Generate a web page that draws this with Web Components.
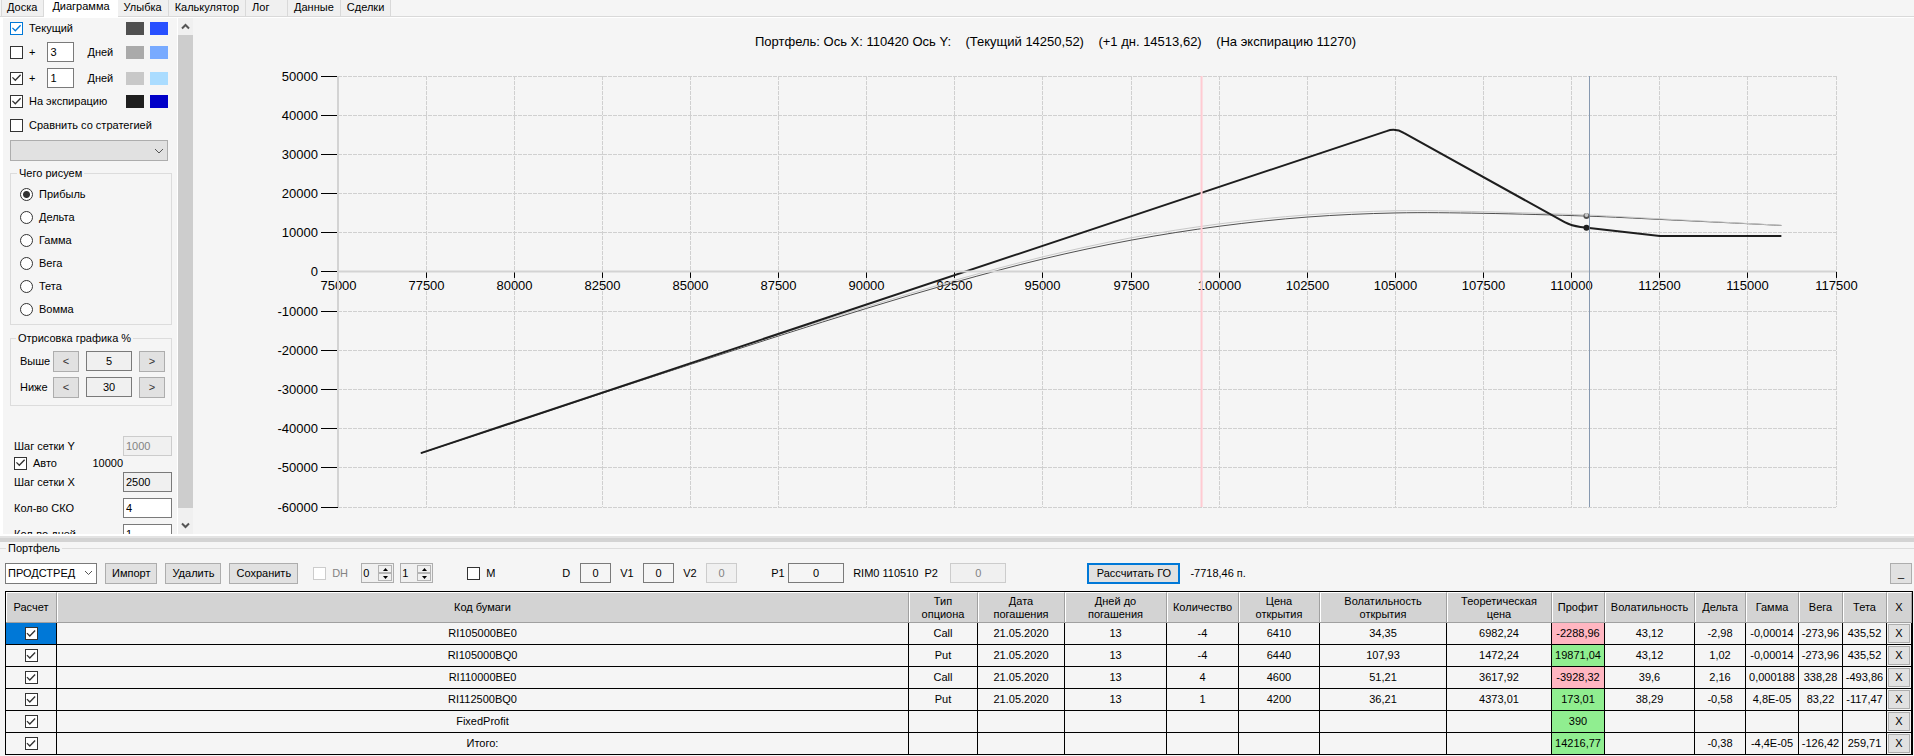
<!DOCTYPE html>
<html lang="ru">
<head>
<meta charset="utf-8">
<title>Портфель</title>
<style>
html, body { margin: 0; height: 100%; }
body {
    background: #f5f5f5;
    color: #000;
    font: 11px/13px "Liberation Sans", Arial, sans-serif;
}
</style>
</head>
<body>
<option-desk></option-desk>

<script>
const base = `
<style>
*, *::before, *::after { box-sizing: border-box; }
button, input, select { font: inherit; color: inherit; margin: 0; border-radius: 0; outline: none; }
button { background: #e1e1e1; border: 1px solid #adadad; padding: 0; }
input[type=text] {
    height: 20px;
    border: 1px solid #7a7a7a;
    background: #fff;
    padding: 0 2px;
    min-width: 0;
}
input[type=text].gray { background: #f0f0f0; }
input[type=text]:disabled { border-color: #ccc; background: #f0f0f0; color: #838383; }
fieldset { margin: 0; min-width: 0; border: 1px solid #dcdcdc; }
legend { padding: 0 2px; }
</style>
`

// checkbox or radio with its label
class TickBox extends HTMLElement {
    constructor() {
        super()
        this._root = this.attachShadow({ mode: 'open' })
        const type = this.getAttribute('type') || 'checkbox'
        const checked = this.hasAttribute('checked') ? 'checked' : ''
        const disabled = this.hasAttribute('disabled') ? 'disabled' : ''
        const aria = this.getAttribute('hint') ? `aria-label="${this.getAttribute('hint')}"` : ''
        this._root.innerHTML = `
        ${base}
        <style>
        :host { display: inline-flex; flex: none; }
        label { display: flex; align-items: center; gap: var(--gap, 6px); white-space: nowrap; }
        input {
            appearance: none;
            display: block;
            flex: none;
            width: 13px;
            height: 13px;
            background: #fff;
            border: 1px solid #333;
        }
        input[type=checkbox]:checked::before {
            content: "";
            display: block;
            height: 11px;
            background: #333;
            clip-path: polygon(9% 48%, 17% 40%, 39% 61%, 83% 15%, 92% 24%, 39% 79%);
        }
        input[type=radio] { border-radius: 50%; }
        input[type=radio]:checked { background: radial-gradient(circle, #333 3px, #fff 4px); }
        :host([hot]) input { border-color: #0078d7; }
        :host([hot]) input:checked::before { background: #0078d7; }
        input:disabled { border-color: #ccc; }
        input:disabled + span { color: #838383; }
        </style>
        <label>
            <input type="${type}" ${checked} ${disabled} ${aria}>
            <span><slot></slot></span>
        </label>
        `
    }
}
customElements.define('tick-box', TickBox)

class ColorPair extends HTMLElement {
    constructor() {
        super()
        this._root = this.attachShadow({ mode: 'open' })
        const colors = this.getAttribute('colors').split(' ')
        this._root.innerHTML = `
        <style>
        :host { display: flex; gap: 6px; margin-left: auto; margin-right: 4px; }
        i { width: 18px; height: 13px; }
        </style>
        ${colors.map(c => `<i style="background:${c}"></i>`).join('')}
        `
    }
}
customElements.define('color-pair', ColorPair)

class TabStrip extends HTMLElement {
    constructor() {
        super()
        this._root = this.attachShadow({ mode: 'open' })
        const tabs = this.getAttribute('tabs').split(',')
        const active = this.getAttribute('active')
        this._root.innerHTML = `
        ${base}
        <style>
        :host { display: block; flex: none; border-bottom: 1px solid #fff; }
        nav { display: flex; height: 17px; padding-left: 1px; border-bottom: 1px solid #d9d9d9; }
        button {
            height: 16px;
            min-width: 42px;
            padding: 0 6px 1px;
            background: #f0f0f0;
            border: 0;
            border-right: 1px solid #d9d9d9;
            text-align: left;
        }
        button:first-child { border-left: 1px solid #d9d9d9; padding-left: 5px; }
        button.active { height: 17px; padding: 0 8px 5px; background: #fff; border: 0; }
        </style>
        <nav>${tabs.map(t => `<button class="${t === active ? 'active' : ''}">${t}</button>`).join('')}</nav>
        `
    }
}
customElements.define('tab-strip', TabStrip)

class SidePanel extends HTMLElement {
    constructor() {
        super()
        this._root = this.attachShadow({ mode: 'open' })
        const kinds = ['Прибыль', 'Дельта', 'Гамма', 'Вега', 'Тета', 'Вомма']
        this._root.innerHTML = `
        ${base}
        <style>
        :host { display: flex; flex: none; width: 193px; overflow: hidden; border-left: 3px solid #fff; }
        .body { flex: 1; padding: 0 5px 0 7px; border-right: 1px solid #fff; overflow: hidden; }
        .row { display: flex; align-items: center; height: 21px; }
        .tall { height: 26px; }
        .days { width: 27px; margin: 0 13px 0 12px; }
        .strategy {
            display: block;
            appearance: none;
            width: 100%;
            height: 21px;
            margin-top: 2px;
            border: 1px solid #adadad;
            background: #e1e1e1;
        }
        .pick { display: grid; margin-right: 4px; }
        .pick > * { grid-area: 1 / 1; }
        .pick svg { justify-self: end; align-self: center; margin: 2px 4px 0 0; }
        .kinds { margin-top: 6px; padding: 3px 9px; }
        .kinds .row { height: 23px; }
        .range { margin-top: 7px; padding: 3px 6px 5px 9px; }
        legend { margin-left: -4px; }
        .kinds legend { margin-left: -3px; }
        .range label { width: 33px; }
        .range button { width: 26px; height: 21px; color: #333; }
        .range input { flex: 1; margin: 0 7px; text-align: center; }
        .grid { margin-top: 30px; padding-left: 4px; }
        .grid .row { height: 20px; margin-bottom: 6px; justify-content: space-between; }
        .grid .row:first-child { margin: 0; }
        .grid .auto { height: 14px; margin-bottom: 2px; padding-right: 49px; }
        .grid input { width: 49px; }
        .bar { flex: none; width: 15px; display: flex; flex-direction: column; background: #f0f0f0; }
        .bar button { height: 17px; background: none; border: 0; display: grid; place-items: center; }
        .bar button:last-child { height: 26px; padding-top: 14px; align-items: start; }
        .thumb { flex: 1; background: #cdcdcd; }
        </style>
        <div class="body">
            <div class="row"><tick-box checked hot>Текущий</tick-box><color-pair colors="#505050 #2850ff"></color-pair></div>
            <div class="row tall">
                <tick-box hint="Сдвиг 1"><span>+</span></tick-box>
                <input class="days" type="text" value="3" aria-label="Дней">Дней
                <color-pair colors="#aaaaaa #78aaff"></color-pair>
            </div>
            <div class="row tall">
                <tick-box checked hint="Сдвиг 2"><span>+</span></tick-box>
                <input class="days" type="text" value="1" aria-label="Дней">Дней
                <color-pair colors="#c8c8c8 #aadcff"></color-pair>
            </div>
            <div class="row"><tick-box checked>На экспирацию</tick-box><color-pair colors="#1e1e1e #0000c8"></color-pair></div>
            <div class="row tall"><tick-box>Сравнить со стратегией</tick-box></div>
            <div class="pick">
                <select class="strategy" aria-label="Стратегия"></select>
                <svg width="10" height="6" viewBox="0 0 10 6"><path d="M1 1l4 4 4-4" fill="none" stroke="#555"/></svg>
            </div>
            <fieldset class="kinds">
                <legend>Чего рисуем</legend>
                ${kinds.map((k, i) => `<div class="row"><tick-box type="radio" ${i === 0 ? 'checked' : ''}>${k}</tick-box></div>`).join('')}
            </fieldset>
            <fieldset class="range">
                <legend>Отрисовка графика %</legend>
                <div class="row tall"><label for="above">Выше</label><button>&lt;</button><input id="above" class="gray" type="text" value="5"><button>&gt;</button></div>
                <div class="row tall"><label for="below">Ниже</label><button>&lt;</button><input id="below" class="gray" type="text" value="30"><button>&gt;</button></div>
            </fieldset>
            <div class="grid">
                <div class="row"><label for="stepy">Шаг сетки Y</label><input id="stepy" type="text" value="1000" disabled></div>
                <div class="row auto"><tick-box checked>Авто</tick-box><span>10000</span></div>
                <div class="row"><label for="stepx">Шаг сетки X</label><input id="stepx" class="gray" type="text" value="2500"></div>
                <div class="row"><label for="sko">Кол-во СКО</label><input id="sko" type="text" value="4"></div>
                <div class="row"><label for="ndays">Кол-во дней</label><input id="ndays" type="text" value="1"></div>
            </div>
        </div>
        <div class="bar">
            <button aria-label="Вверх"><svg width="9" height="7" viewBox="0 0 9 7"><path d="M1 5.5l3.5-3.5L8 5.5" fill="none" stroke="#555" stroke-width="2"/></svg></button>
            <div class="thumb"></div>
            <button aria-label="Вниз"><svg width="9" height="7" viewBox="0 0 9 7"><path d="M1 1.5L4.5 5 8 1.5" fill="none" stroke="#555" stroke-width="2"/></svg></button>
        </div>
        `
    }
}
customElements.define('side-panel', SidePanel)

// [underlying price, profit]
const current = [
    [77350, -46300], [80000, -38400], [82500, -30950], [85000, -23600], [87500, -16350], [90000, -9300],
    [92500, -2650], [95000, 3300], [97500, 8100], [100000, 11650], [102500, 14000], [105000, 15050],
    [107500, 14950], [110420, 14250], [112500, 13400], [115000, 12300], [115950, 11850]
]
const nextDay = [
    [77350, -46260], [80000, -38300], [82500, -30820], [85000, -23400], [87500, -16050], [90000, -8900],
    [92500, -2150], [95000, 3850], [97500, 8700], [100000, 12250], [102500, 14550], [105000, 15600],
    [107500, 15350], [110420, 14514], [112500, 13550], [115000, 12350], [115950, 11900]
]

class ProfitChart extends HTMLElement {
    constructor() {
        super()
        this._root = this.attachShadow({ mode: 'open' })
        this._root.innerHTML = `
        <style>
        :host { display: flex; flex-direction: column; flex: 1; min-width: 0; font-size: 13px; }
        h1 { margin: 0; padding: 16px 0 0 4px; font: inherit; line-height: 16px; text-align: center; white-space: pre; }
        .plot { flex: 1; min-height: 0; overflow: hidden; }
        svg { display: block; }
        .net { stroke: #d0d0d0; stroke-dasharray: 4 1; }
        .tick { stroke: #000; }
        </style>
        <h1>Портфель: Ось X: 110420 Ось Y:    (Текущий 14250,52)    (+1 дн. 14513,62)    (На экспирацию 11270)</h1>
        <div class="plot"></div>
        `
        this._plot = this._root.querySelector('.plot')
    }
    connectedCallback() {
        this.draw()
        new ResizeObserver(() => this.draw()).observe(this._plot)
    }
    draw() {
        const w = this._plot.clientWidth
        const h = this._plot.clientHeight
        const left = 145, right = w - 78, top = 26, bottom = h - 27
        const px = v => left + (v - 75000) / 42500 * (right - left)
        const py = v => top + (50000 - v) / 110000 * (bottom - top)
        const snap = n => Math.floor(n) + 0.5
        const smooth = pts => {
            const p = pts.map(([x, y]) => [px(x), py(y)])
            let d = `M${p[0]}`
            for (let i = 0; i < p.length - 1; i++) {
                const a = p[i - 1] || p[i], b = p[i], c = p[i + 1], e = p[i + 2] || c
                d += `C${b[0] + (c[0] - a[0]) / 6},${b[1] + (c[1] - a[1]) / 6} ${c[0] - (e[0] - b[0]) / 6},${c[1] - (e[1] - b[1]) / 6} ${c}`
            }
            return d
        }
        const pt = (x, y) => `${px(x)},${py(y)}`
        let net = '', labels = ''
        for (let v = 50000; v >= -60000; v -= 10000) {
            const y = snap(py(v))
            net += `<path class="net" d="M${left} ${y}H${right}"/>`
            labels += `<path class="tick" d="M${left - 17} ${y}H${left}"/>
                <text x="${left - 20}" y="${y + 4}" text-anchor="end">${v}</text>`
        }
        for (let v = 75000; v <= 117500; v += 2500) {
            const x = snap(px(v))
            net += `<path class="net" d="M${x} ${top}V${bottom}"/>`
            labels += `<path class="tick" d="M${x} ${py(0)}v6"/>
                <text x="${x}" y="${py(0) + 18}" text-anchor="middle">${v}</text>`
        }
        this._plot.innerHTML = `
        <svg width="${w}" height="${h}">
            ${net}
            ${labels}
            <g fill="none">
                <path d="${smooth(current)}" stroke="#505050"/>
                <path d="${smooth(nextDay)}" stroke="#c8c8c8"/>
                <path d="M${pt(77350, -46260)}L${pt(104750, 35940)}Q${pt(105000, 36800)} ${pt(105250, 35440)}L${pt(109800, 12690)}Q${pt(110000, 11690)} ${pt(110250, 11440)}L${pt(112500, 9190)}H${px(115950)}" stroke="#1e1e1e" stroke-width="2"/>
                <path d="M${left} ${top}V${bottom}M${left} ${snap(py(0))}H${right}" stroke="#d3d3d3" stroke-width="2"/>
            </g>
            <path d="M${px(99500)} ${top}V${bottom}" stroke="#ffcbd2" stroke-width="2"/>
            <path d="M${snap(px(110510))} ${top}V${bottom}" stroke="#8799b0"/>
            <circle cx="${px(110420)}" cy="${py(14250)}" r="3" fill="#505050"/>
            <circle cx="${px(110420)}" cy="${py(14514)}" r="2" fill="#c8c8c8"/>
            <circle cx="${px(110420)}" cy="${py(11270)}" r="3" fill="#1e1e1e"/>
        </svg>
        `
    }
}
customElements.define('profit-chart', ProfitChart)

class SpinBox extends HTMLElement {
    constructor() {
        super()
        this._root = this.attachShadow({ mode: 'open' })
        this._root.innerHTML = `
        ${base}
        <style>
        :host { display: flex; box-sizing: border-box; flex: none; width: 33px; height: 20px; border: 1px solid #adadad; }
        input[type=text] { flex: 1; width: 0; height: 18px; border: 0; background: #f0f0f0; padding: 0 1px; }
        div { display: flex; flex-direction: column; width: 16px; padding: 1px; background: #f0f0f0; }
        button { flex: 1; display: grid; place-items: center; min-height: 0; background: #f0f0f0; border-color: #b4b4b4; }
        </style>
        <input type="text" value="${this.getAttribute('value')}" aria-label="${this.getAttribute('hint')}">
        <div>
            <button aria-label="Больше"><svg width="5" height="3"><path d="M0 3L2.5 0 5 3z"/></svg></button>
            <button aria-label="Меньше"><svg width="5" height="3"><path d="M0 0L2.5 3 5 0z"/></svg></button>
        </div>
        `
    }
}
customElements.define('spin-box', SpinBox)

class PortfolioBar extends HTMLElement {
    constructor() {
        super()
        this._root = this.attachShadow({ mode: 'open' })
        this._root.innerHTML = `
        ${base}
        <style>
        :host { display: flex; align-items: center; height: 36px; padding: 0 2px 0 5px; white-space: nowrap; }
        div { display: flex; align-items: center; }
        button { height: 21px; padding: 0 6px; }
        input[type=text] { width: 31px; text-align: center; background: #f5f5f5; }
        .files { gap: 8px; }
        .pick { display: grid; width: 92px; }
        .pick > * { grid-area: 1 / 1; }
        .pick svg { justify-self: end; align-self: center; margin-right: 4px; }
        select { appearance: none; height: 21px; background: #fff; border: 1px solid #7a7a7a; padding: 0 2px; }
        .spins { margin-left: 15px; gap: 6px; }
        .spins tick-box { width: 42px; }
        .multi { margin-left: 34px; width: 95px; }
        .vols { gap: 9px; }
        .vols label { width: 14px; }
        .vols label:first-child { width: 9px; }
        .prices { margin-left: 34px; gap: 4px; }
        .prices label { width: 13px; }
        .prices input[type=text] { width: 56px; }
        .prices span { margin: 0 2px 0 5px; }
        .prices input:last-child { margin-left: 9px; }
        .margin { margin-left: 81px; gap: 10px; }
        .margin button { border: 2px solid #0078d7; width: 93px; padding: 0; }
        .fold { margin-left: auto; width: 22px; padding: 0; }
        </style>
        <div class="files">
            <div class="pick">
                <select aria-label="Портфель"><option>ПРОДСТРЕД</option></select>
                <svg width="9" height="6" viewBox="0 0 9 6"><path d="M1 1l3.5 3.5L8 1" fill="none" stroke="#555"/></svg>
            </div>
            <button>Импорт</button><button>Удалить</button><button>Сохранить</button>
        </div>
        <div class="spins">
            <tick-box disabled>DH</tick-box>
            <spin-box value="0" hint="DH от"></spin-box>
            <spin-box value="1" hint="DH до"></spin-box>
        </div>
        <div class="multi"><tick-box>M</tick-box></div>
        <div class="vols">
            <label for="d">D</label><input id="d" type="text" value="0">
            <label for="v1">V1</label><input id="v1" type="text" value="0">
            <label for="v2">V2</label><input id="v2" type="text" value="0" disabled>
        </div>
        <div class="prices">
            <label for="p1">P1</label><input id="p1" type="text" value="0">
            <span>RIM0 110510</span>
            <label for="p2">P2</label><input id="p2" type="text" value="0" disabled>
        </div>
        <div class="margin"><button>Рассчитать ГО</button><span>-7718,46 п.</span></div>
        <button class="fold">_</button>
        `
    }
}
customElements.define('portfolio-bar', PortfolioBar)

const columns = [
    ['Расчет', 51], ['Код бумаги', 0], ['Тип<br>опциона', 69], ['Дата<br>погашения', 87],
    ['Дней до<br>погашения', 102], ['Количество', 72], ['Цена<br>открытия', 81],
    ['Волатильность<br>открытия', 127], ['Теоретическая<br>цена', 105], ['Профит', 53],
    ['Волатильность', 90], ['Дельта', 51], ['Гамма', 53], ['Вега', 44], ['Тета', 44], ['X', 25]
]
const rows = [
    ['RI105000BE0', 'Call', '21.05.2020', '13', '-4', '6410', '34,35', '6982,24', '-2288,96', '43,12', '-2,98', '-0,00014', '-273,96', '435,52'],
    ['RI105000BQ0', 'Put', '21.05.2020', '13', '-4', '6440', '107,93', '1472,24', '19871,04', '43,12', '1,02', '-0,00014', '-273,96', '435,52'],
    ['RI110000BE0', 'Call', '21.05.2020', '13', '4', '4600', '51,21', '3617,92', '-3928,32', '39,6', '2,16', '0,000188', '338,28', '-493,86'],
    ['RI112500BQ0', 'Put', '21.05.2020', '13', '1', '4200', '36,21', '4373,01', '173,01', '38,29', '-0,58', '4,8E-05', '83,22', '-117,47'],
    ['FixedProfit', '', '', '', '', '', '', '', '390', '', '', '', '', ''],
    ['Итого:', '', '', '', '', '', '', '', '14216,77', '', '-0,38', '-4,4E-05', '-126,42', '259,71']
]
const profitCol = 8

class PortfolioTable extends HTMLElement {
    constructor() {
        super()
        this._root = this.attachShadow({ mode: 'open' })
        const cell = (v, i) => {
            const cls = i === profitCol ? (v.startsWith('-') ? 'loss' : 'gain') : ''
            return `<td class="${cls}">${v}</td>`
        }
        this._root.innerHTML = `
        ${base}
        <style>
        :host { display: block; padding: 0 1px 1px 5px; }
        table {
            width: 100%;
            table-layout: fixed;
            border-collapse: separate;
            border-spacing: 0;
            border: 1px solid #000;
            border-bottom: 0;
        }
        th, td { padding: 0; text-align: center; white-space: nowrap; }
        th {
            height: 31px;
            font-weight: normal;
            background: #d3d3d3;
            border-top: 1px solid #fff;
            border-bottom: 1px solid #a0a0a0;
            border-right: 1px solid #a0a0a0;
            box-shadow: inset 1px 0 #fff;
        }
        td { height: 22px; border-right: 1px solid #000; border-bottom: 1px solid #000; }
        tr:first-child td:first-child { background: #0078d7; }
        td tick-box { --gap: 0; vertical-align: middle; }
        .loss { background: #ffb6c1; }
        .gain { background: #90ee90; }
        td button { display: block; width: 22px; height: 19px; margin: 0 auto; }
        </style>
        <table>
            <colgroup>${columns.map(c => c[1] ? `<col style="width:${c[1]}px">` : '<col>').join('')}</colgroup>
            <thead><tr>${columns.map(c => `<th>${c[0]}</th>`).join('')}</tr></thead>
            <tbody>
            ${rows.map(r => `<tr><td><tick-box checked hint="Расчет"></tick-box></td>${r.map(cell).join('')}<td><button>X</button></td></tr>`).join('')}
            </tbody>
        </table>
        `
    }
}
customElements.define('portfolio-table', PortfolioTable)

class OptionDesk extends HTMLElement {
    constructor() {
        super()
        this._root = this.attachShadow({ mode: 'open' })
        this._root.innerHTML = `
        ${base}
        <style>
        :host { display: flex; flex-direction: column; height: 100vh; overflow: hidden; }
        main { display: flex; flex: 1; min-height: 0; }
        .split { flex: none; height: 8px; border-top: 2px solid #fff; border-bottom: 4px solid #d3d3d3; background: #e3e3e3; }
        fieldset { flex: none; border-width: 1px 0 0; padding: 0; }
        legend { margin-left: 6px; }
        </style>
        <tab-strip tabs="Доска,Диаграмма,Улыбка,Калькулятор,Лог,Данные,Сделки" active="Диаграмма"></tab-strip>
        <main>
            <side-panel></side-panel>
            <profit-chart></profit-chart>
        </main>
        <div class="split"></div>
        <fieldset>
            <legend>Портфель</legend>
            <portfolio-bar></portfolio-bar>
            <portfolio-table></portfolio-table>
        </fieldset>
        `
    }
}
customElements.define('option-desk', OptionDesk)
</script>
</body>
</html>
